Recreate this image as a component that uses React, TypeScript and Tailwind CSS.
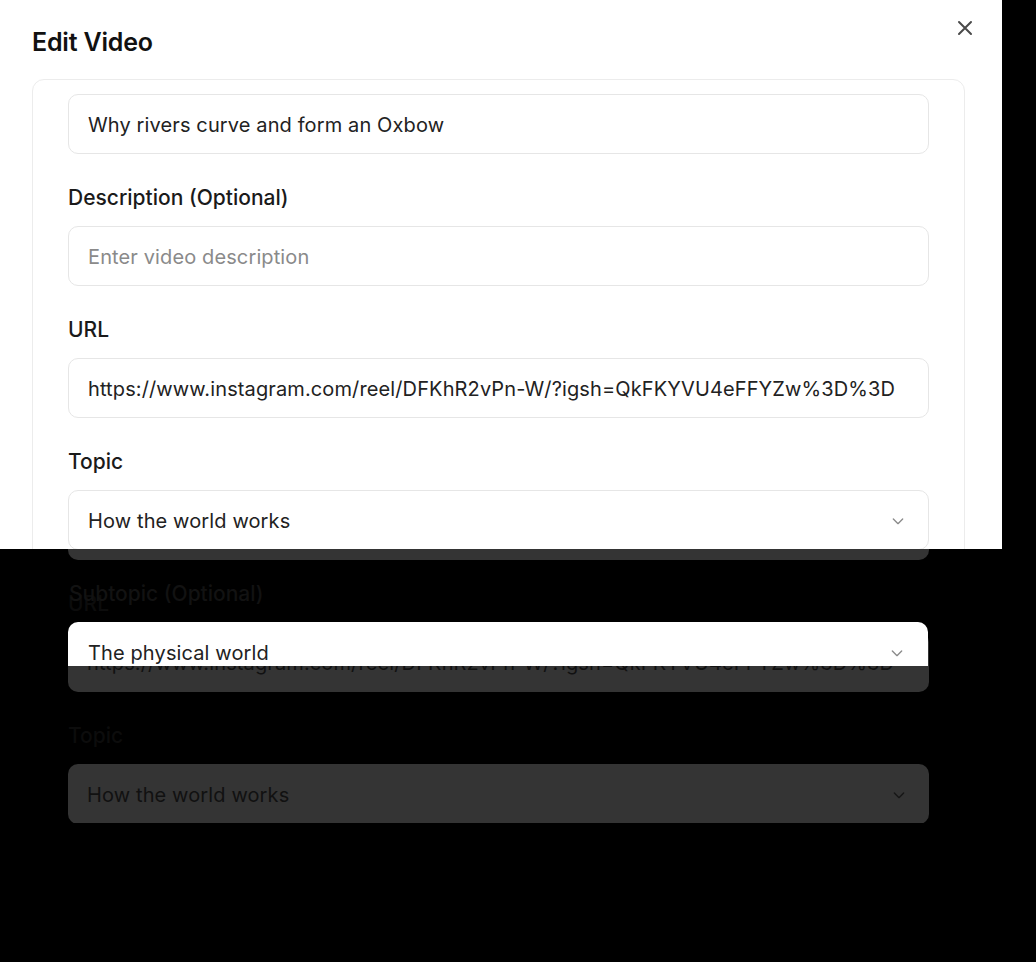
import React from "react";

const FONT = { fontFamily: "Inter, 'Noto Sans', sans-serif" };

type Variant = "light" | "ghost";

function Chevron({ ghost }: { ghost?: boolean }) {
  return (
    <svg width="16" height="16" viewBox="0 0 24 24" fill="none" stroke={ghost ? "#161616" : "#8a8a8a"} strokeWidth="2" strokeLinecap="round" strokeLinejoin="round">
      <path d="M5 9l7 7 7-7" />
    </svg>
  );
}

function Field({
  label,
  value,
  placeholder,
  select,
  variant,
}: {
  label?: string;
  value?: string;
  placeholder?: string;
  select?: boolean;
  variant: Variant;
}) {
  const ghost = variant === "ghost";
  return (
    <div className="flex flex-col">
      {label && (
        <div className={`h-[28px] leading-[28px] pt-[1px] text-[21px] font-medium mb-[15px] ${ghost ? "text-[#0c0c0c]" : "text-[#1a1a1a]"}`}>
          {label}
        </div>
      )}
      <div
        className={`h-[60px] rounded-[10px] flex items-center justify-between pl-[19px] pr-[22px] pt-[2px] text-[20px] tracking-[0.12px] ${
          ghost ? "bg-[#343434] text-[#111111]" : "bg-white border border-[#e6e6e6] text-[#222222]"
        }`}
      >
        <span className={value ? "" : ghost ? "text-[#1a1a1a]" : "text-[#8a8a8a]"}>{value ?? placeholder}</span>
        {select && <Chevron ghost={ghost} />}
      </div>
    </div>
  );
}

function Panel({ variant }: { variant: Variant }) {
  const ghost = variant === "ghost";
  return (
    <div className={`relative w-[1002px] h-[549px] overflow-hidden pl-8 pt-[26px] ${ghost ? "" : "bg-white"}`}>
      <h2 className={`text-[25px] leading-8 font-semibold tracking-[-0.2px] ${ghost ? "text-black" : "text-[#111111]"}`}>Edit Video</h2>
      {!ghost && (
        <button className="absolute right-[29px] top-[20px] w-[16px] h-[16px] flex items-center justify-center">
          <svg width="16" height="16" viewBox="0 0 16 16" fill="none" stroke="#4a4a4a" strokeWidth="2" strokeLinecap="round">
            <path d="M2 2l12 12M14 2L2 14" />
          </svg>
        </button>
      )}
      <div className={`mt-[21px] w-[933px] h-[700px] rounded-[12px] border px-[35px] pt-[14px] ${ghost ? "border-transparent" : "border-[#ececec]"}`}>
        <div className="flex flex-col gap-[29px]">
          <Field variant={variant} value="Why rivers curve and form an Oxbow" />
          <Field variant={variant} label="Description (Optional)" placeholder="Enter video description" />
          <Field variant={variant} label="URL" value="https://www.instagram.com/reel/DFKhR2vPn-W/?igsh=QkFKYVU4eFFYZw%3D%3D" />
          <Field variant={variant} label="Topic" value="How the world works" select />
        </div>
      </div>
    </div>
  );
}

export default function App() {
  return (
    <div className="relative w-[1036px] h-[962px] bg-black overflow-hidden" style={FONT}>
      <div className="absolute left-0 top-[274px]">
        <Panel variant="ghost" />
      </div>
      <div className="absolute left-[69px] top-[580px] h-[28px] leading-[28px] text-[21px] font-medium text-[#121212]">
        Subtopic (Optional)
      </div>
      <div className="absolute left-[68px] top-[622px] w-[860px] h-[44px] overflow-hidden rounded-t-[10px] bg-white">
        <div className="h-[60px] flex items-center justify-between pl-[20px] pr-[23px] pt-[2px] text-[20px] tracking-[0.12px] text-[#222222]">
          <span>The physical world</span>
          <Chevron />
        </div>
      </div>
      <div className="absolute left-0 top-0">
        <Panel variant="light" />
      </div>
    </div>
  );
}
